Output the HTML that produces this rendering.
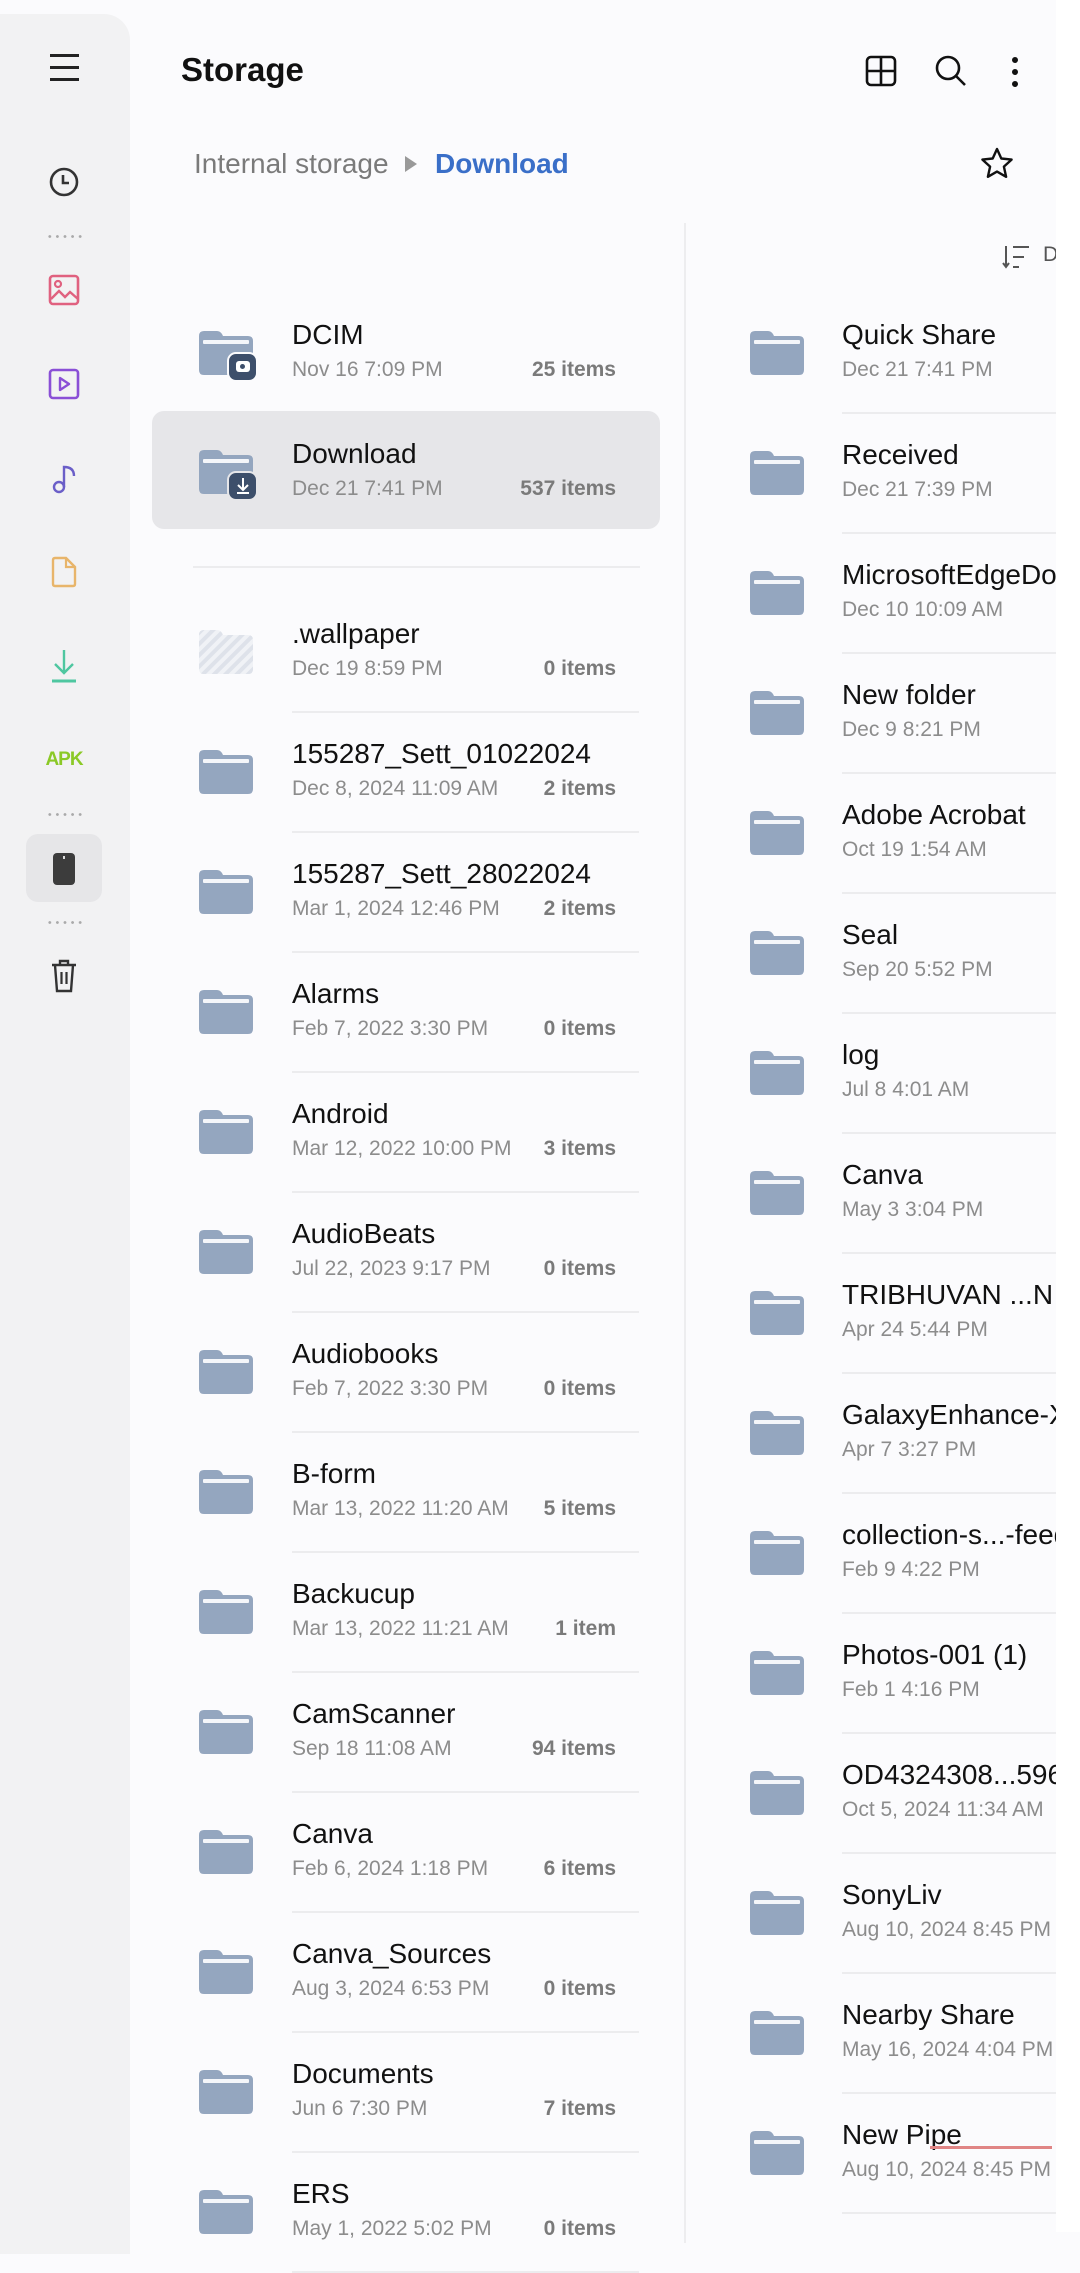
<!DOCTYPE html>
<html><head><meta charset="utf-8"><style>
*{margin:0;padding:0;box-sizing:border-box}
body{width:1080px;height:2232px;overflow:hidden;background:#fbfbfd;font-family:"Liberation Sans",sans-serif;position:relative}
.abs{position:absolute}
.side{position:absolute;left:0;top:14px;width:130px;height:2240px;background:#f2f2f3;border-top-right-radius:26px}
.row{position:absolute;height:120px;width:1000px}
.row svg.f{position:absolute;top:38px;width:54px;height:44px}
.t{position:absolute;top:26px;font-size:28px;line-height:32px;color:#111;white-space:nowrap}
.d{position:absolute;top:65px;font-size:21px;line-height:24px;color:#8c8c8c;white-space:nowrap}
.n{position:absolute;top:65px;font-size:21px;line-height:24px;color:#7a7a7a;font-weight:bold;white-space:nowrap;text-align:right;width:200px}
.L svg.f{left:199px}.L .t,.L .d{left:292px}.L .n{left:416px}
.L .s{position:absolute;left:292px;width:347px;top:119px;height:2px;background:#ececee}
.R svg.f{left:66px}.R .t,.R .d{left:158px}
.R .s{position:absolute;left:158px;width:300px;top:119px;height:2px;background:#ececee}
.dots{position:absolute;left:46px;width:38px;height:3px;background:radial-gradient(circle,#aaa 1.2px,transparent 1.6px) 0 0/7.6px 3px repeat-x}
</style></head><body>
<svg width="0" height="0" style="position:absolute"><defs>
<symbol id="f" viewBox="0 0 54 44"><path d="M0 5q0-5 5-5h13q3 0 5 3l1 2h25q5 0 5 5v29q0 5-5 5H5q-5 0-5-5z" fill="#94a6bf"/><rect x="4" y="9" width="46" height="4" rx="1" fill="#f4f6fa"/></symbol>
</defs></svg>

<div class="side"></div>
<div class="abs" style="left:50px;top:54px;width:29px;height:3px;background:#222"></div>
<div class="abs" style="left:50px;top:66px;width:29px;height:3px;background:#222"></div>
<div class="abs" style="left:50px;top:78px;width:29px;height:3px;background:#222"></div>
<svg class="abs" style="left:48px;top:166px" width="32" height="32" viewBox="0 0 32 32"><circle cx="16" cy="16" r="13" fill="none" stroke="#333" stroke-width="2.6"/><path d="M15 9v8h6" fill="none" stroke="#333" stroke-width="2.6"/></svg>
<div class="dots" style="top:235px"></div>
<svg class="abs" style="left:48px;top:274px" width="32" height="32" viewBox="0 0 32 32"><rect x="2" y="2" width="28" height="28" rx="3" fill="none" stroke="#e0617f" stroke-width="2.6"/><circle cx="10" cy="10" r="3" fill="none" stroke="#e0617f" stroke-width="2.2"/><path d="M3 25l8-8 6 6 5-5 8 7" fill="none" stroke="#e0617f" stroke-width="2.4"/></svg>
<svg class="abs" style="left:48px;top:368px" width="32" height="32" viewBox="0 0 32 32"><rect x="2" y="2" width="28" height="28" rx="3" fill="none" stroke="#8a4fd6" stroke-width="2.6"/><path d="M12 10v12l9-6z" fill="none" stroke="#8a4fd6" stroke-width="2.4" stroke-linejoin="round"/></svg>
<svg class="abs" style="left:50px;top:462px" width="30" height="32" viewBox="0 0 30 32"><circle cx="9" cy="25" r="5" fill="none" stroke="#6b5fc8" stroke-width="2.4"/><path d="M14 25V5q10 0 10 9" fill="none" stroke="#6b5fc8" stroke-width="2.4"/></svg>
<svg class="abs" style="left:50px;top:556px" width="28" height="32" viewBox="0 0 28 32"><path d="M3 4q0-2 2-2h11l9 9v17q0 2-2 2H5q-2 0-2-2z" fill="none" stroke="#e8b56a" stroke-width="2.4"/><path d="M16 2v9h9" fill="none" stroke="#e8b56a" stroke-width="2.2"/></svg>
<svg class="abs" style="left:48px;top:648px" width="32" height="36" viewBox="0 0 32 36"><path d="M16 2v22M7 16l9 9 9-9" fill="none" stroke="#4fc7a0" stroke-width="2.4"/><path d="M4 33h24" stroke="#4fc7a0" stroke-width="3"/></svg>
<div class="abs" style="left:34px;top:749px;width:60px;text-align:center;font-size:19px;font-weight:bold;color:#8bc926;letter-spacing:-1px">APK</div>
<div class="dots" style="top:813px"></div>
<div class="abs" style="left:26px;top:834px;width:76px;height:68px;background:#e6e6e8;border-radius:12px"></div>
<div class="abs" style="left:53px;top:853px;width:22px;height:32px;background:#3c3c3c;border-radius:4px"></div>
<div class="abs" style="left:63px;top:856px;width:2px;height:3px;background:#ddd"></div>
<div class="dots" style="top:921px"></div>
<svg class="abs" style="left:50px;top:958px" width="28" height="36" viewBox="0 0 28 36"><path d="M2 7h24M10 7V3h8v4M5 7l2 26h14l2-26" fill="none" stroke="#333" stroke-width="2.4"/><path d="M11.5 14v12M16.5 14v12" stroke="#333" stroke-width="2.2"/></svg>

<div class="abs" style="left:181px;top:51px;font-size:33px;font-weight:bold;color:#111">Storage</div>
<svg class="abs" style="left:865px;top:55px" width="32" height="32" viewBox="0 0 32 32"><rect x="2" y="2" width="28" height="28" rx="4" fill="none" stroke="#111" stroke-width="2.6"/><path d="M16 2v28M2 16h28" stroke="#111" stroke-width="2.6"/></svg>
<svg class="abs" style="left:934px;top:54px" width="34" height="34" viewBox="0 0 34 34"><circle cx="14" cy="14" r="11" fill="none" stroke="#111" stroke-width="2.6"/><path d="M22 22l9 9" stroke="#111" stroke-width="2.6"/></svg>
<div class="abs" style="left:1012px;top:57px;width:6px;height:6px;border-radius:3px;background:#111;box-shadow:0 12px 0 #111,0 24px 0 #111"></div>
<div class="abs" style="left:194px;top:148px;font-size:28px;color:#7a7a7a">Internal storage</div>
<svg class="abs" style="left:404px;top:155px" width="14" height="18" viewBox="0 0 14 18"><path d="M1 1l12 8-12 8z" fill="#999"/></svg>
<div class="abs" style="left:435px;top:148px;font-size:28px;font-weight:bold;color:#3a6fc8">Download</div>
<svg class="abs" style="left:979px;top:146px" width="36" height="36" viewBox="0 0 36 36"><path d="M18 3l4.3 9.5 10.3 1.1-7.7 7 2.2 10.2L18 25.6l-9.1 5.2 2.2-10.2-7.7-7 10.3-1.1z" fill="none" stroke="#111" stroke-width="2.4" stroke-linejoin="round"/></svg>
<div class="abs" style="left:684px;top:223px;width:2px;height:2020px;background:#ededef"></div>
<svg class="abs" style="left:1002px;top:244px" width="30" height="26" viewBox="0 0 30 26"><path d="M4 2v21M1 19l3 4 3-4" fill="none" stroke="#555" stroke-width="2"/><path d="M11 3h16M11 13h11M11 23h6" stroke="#555" stroke-width="2"/></svg>
<div class="abs" style="left:1043px;top:243px;font-size:21px;color:#555;width:13px;overflow:hidden">D</div>

<div class="row L" style="top:293px"><svg class="f"><use href="#f"/></svg>
<div class="abs" style="left:227px;top:59px;width:31px;height:30px;border-radius:9px;background:#3d4f6b;border:2px solid #fbfbfd"></div>
<div class="abs" style="left:236px;top:68px;width:14px;height:11px;border-radius:3px;background:#fff"></div><div class="abs" style="left:240px;top:71px;width:5px;height:5px;border-radius:3px;background:#3d4f6b"></div>
<div class="t">DCIM</div><div class="d">Nov 16 7:09 PM</div><div class="n">25 items</div></div>
<div class="abs" style="left:152px;top:411px;width:508px;height:118px;border-radius:12px;background:#e6e6e9"></div>
<div class="row L" style="top:412px"><svg class="f"><use href="#f"/></svg>
<div class="abs" style="left:227px;top:59px;width:31px;height:30px;border-radius:9px;background:#3d4f6b;border:2px solid #e6e6e9"></div>
<svg class="abs" style="left:233px;top:64px" width="20" height="20" viewBox="0 0 20 20"><path d="M10 2v11M5 9l5 5 5-5M4 17h12" fill="none" stroke="#fff" stroke-width="2"/></svg>
<div class="t">Download</div><div class="d">Dec 21 7:41 PM</div><div class="n">537 items</div></div>
<div class="abs" style="left:193px;top:566px;width:447px;height:2px;background:#ececee"></div>

<div class="row L" style="top:592px"><svg class="f" viewBox="0 0 54 44"><defs><pattern id="h" width="8" height="8" patternUnits="userSpaceOnUse" patternTransform="rotate(45)"><rect width="4" height="8" fill="#d6dbe4"/></pattern></defs><path d="M0 5q0-5 5-5h13q3 0 5 3l1 2h25q5 0 5 5v29q0 5-5 5H5q-5 0-5-5z" fill="url(#h)"/><path d="M0 5q0-5 5-5h13q3 0 5 3l1 2h25q5 0 5 5v29q0 5-5 5H5q-5 0-5-5z" fill="#e6e9ef" opacity=".5"/></svg><div class="t">.wallpaper</div><div class="d">Dec 19 8:59 PM</div><div class="n">0 items</div><div class="s"></div></div>
<div class="row L" style="top:712px"><svg class="f"><use href="#f"/></svg><div class="t">155287_Sett_01022024</div><div class="d">Dec 8, 2024 11:09 AM</div><div class="n">2 items</div><div class="s"></div></div>
<div class="row L" style="top:832px"><svg class="f"><use href="#f"/></svg><div class="t">155287_Sett_28022024</div><div class="d">Mar 1, 2024 12:46 PM</div><div class="n">2 items</div><div class="s"></div></div>
<div class="row L" style="top:952px"><svg class="f"><use href="#f"/></svg><div class="t">Alarms</div><div class="d">Feb 7, 2022 3:30 PM</div><div class="n">0 items</div><div class="s"></div></div>
<div class="row L" style="top:1072px"><svg class="f"><use href="#f"/></svg><div class="t">Android</div><div class="d">Mar 12, 2022 10:00 PM</div><div class="n">3 items</div><div class="s"></div></div>
<div class="row L" style="top:1192px"><svg class="f"><use href="#f"/></svg><div class="t">AudioBeats</div><div class="d">Jul 22, 2023 9:17 PM</div><div class="n">0 items</div><div class="s"></div></div>
<div class="row L" style="top:1312px"><svg class="f"><use href="#f"/></svg><div class="t">Audiobooks</div><div class="d">Feb 7, 2022 3:30 PM</div><div class="n">0 items</div><div class="s"></div></div>
<div class="row L" style="top:1432px"><svg class="f"><use href="#f"/></svg><div class="t">B-form</div><div class="d">Mar 13, 2022 11:20 AM</div><div class="n">5 items</div><div class="s"></div></div>
<div class="row L" style="top:1552px"><svg class="f"><use href="#f"/></svg><div class="t">Backucup</div><div class="d">Mar 13, 2022 11:21 AM</div><div class="n">1 item</div><div class="s"></div></div>
<div class="row L" style="top:1672px"><svg class="f"><use href="#f"/></svg><div class="t">CamScanner</div><div class="d">Sep 18 11:08 AM</div><div class="n">94 items</div><div class="s"></div></div>
<div class="row L" style="top:1792px"><svg class="f"><use href="#f"/></svg><div class="t">Canva</div><div class="d">Feb 6, 2024 1:18 PM</div><div class="n">6 items</div><div class="s"></div></div>
<div class="row L" style="top:1912px"><svg class="f"><use href="#f"/></svg><div class="t">Canva_Sources</div><div class="d">Aug 3, 2024 6:53 PM</div><div class="n">0 items</div><div class="s"></div></div>
<div class="row L" style="top:2032px"><svg class="f"><use href="#f"/></svg><div class="t">Documents</div><div class="d">Jun 6 7:30 PM</div><div class="n">7 items</div><div class="s"></div></div>
<div class="row L" style="top:2152px"><svg class="f"><use href="#f"/></svg><div class="t">ERS</div><div class="d">May 1, 2022 5:02 PM</div><div class="n">0 items</div><div class="s"></div></div>

<div class="abs" style="left:684px;top:0;width:372px;height:2232px;overflow:hidden">
<div class="row R" style="top:293px"><svg class="f"><use href="#f"/></svg><div class="t">Quick Share</div><div class="d">Dec 21 7:41 PM</div><div class="s"></div></div>
<div class="row R" style="top:413px"><svg class="f"><use href="#f"/></svg><div class="t">Received</div><div class="d">Dec 21 7:39 PM</div><div class="s"></div></div>
<div class="row R" style="top:533px"><svg class="f"><use href="#f"/></svg><div class="t">MicrosoftEdgeDownloads</div><div class="d">Dec 10 10:09 AM</div><div class="s"></div></div>
<div class="row R" style="top:653px"><svg class="f"><use href="#f"/></svg><div class="t">New folder</div><div class="d">Dec 9 8:21 PM</div><div class="s"></div></div>
<div class="row R" style="top:773px"><svg class="f"><use href="#f"/></svg><div class="t">Adobe Acrobat</div><div class="d">Oct 19 1:54 AM</div><div class="s"></div></div>
<div class="row R" style="top:893px"><svg class="f"><use href="#f"/></svg><div class="t">Seal</div><div class="d">Sep 20 5:52 PM</div><div class="s"></div></div>
<div class="row R" style="top:1013px"><svg class="f"><use href="#f"/></svg><div class="t">log</div><div class="d">Jul 8 4:01 AM</div><div class="s"></div></div>
<div class="row R" style="top:1133px"><svg class="f"><use href="#f"/></svg><div class="t">Canva</div><div class="d">May 3 3:04 PM</div><div class="s"></div></div>
<div class="row R" style="top:1253px"><svg class="f"><use href="#f"/></svg><div class="t">TRIBHUVAN ...N L</div><div class="d">Apr 24 5:44 PM</div><div class="s"></div></div>
<div class="row R" style="top:1373px"><svg class="f"><use href="#f"/></svg><div class="t">GalaxyEnhance-X</div><div class="d">Apr 7 3:27 PM</div><div class="s"></div></div>
<div class="row R" style="top:1493px"><svg class="f"><use href="#f"/></svg><div class="t">collection-s...-feed</div><div class="d">Feb 9 4:22 PM</div><div class="s"></div></div>
<div class="row R" style="top:1613px"><svg class="f"><use href="#f"/></svg><div class="t">Photos-001 (1)</div><div class="d">Feb 1 4:16 PM</div><div class="s"></div></div>
<div class="row R" style="top:1733px"><svg class="f"><use href="#f"/></svg><div class="t">OD4324308...596</div><div class="d">Oct 5, 2024 11:34 AM</div><div class="s"></div></div>
<div class="row R" style="top:1853px"><svg class="f"><use href="#f"/></svg><div class="t">SonyLiv</div><div class="d">Aug 10, 2024 8:45 PM</div><div class="s"></div></div>
<div class="row R" style="top:1973px"><svg class="f"><use href="#f"/></svg><div class="t">Nearby Share</div><div class="d">May 16, 2024 4:04 PM</div><div class="s"></div></div>
<div class="row R" style="top:2093px"><svg class="f"><use href="#f"/></svg><div class="t">New Pipe</div><div class="d">Aug 10, 2024 8:45 PM</div><div class="s"></div></div>
<div class="abs" style="left:246px;top:2146px;width:122px;height:3px;background:#e08585"></div>
</div>
<div class="abs" style="left:1056px;top:0;width:24px;height:2232px;background:#fff"></div>
</body></html>
